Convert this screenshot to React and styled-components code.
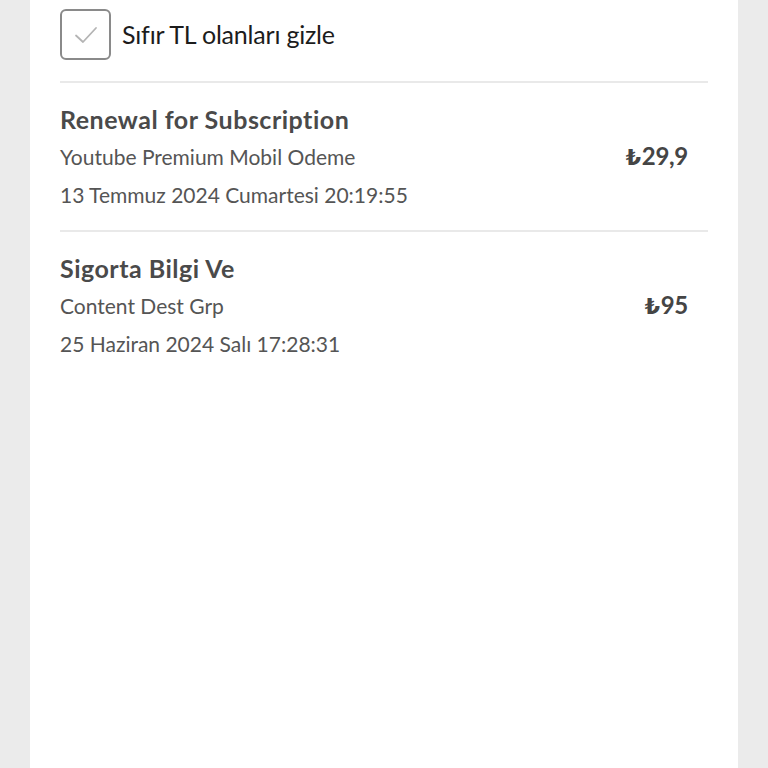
import React from 'react';
import styled, { createGlobalStyle } from 'styled-components';

const GlobalStyle = createGlobalStyle`
  html, body {
    margin: 0;
    padding: 0;
    background: #ebebeb;
  }
  body {
    font-family: Lato, "Noto Sans", "DejaVu Sans", sans-serif;
  }
`;

const transactions = [
  {
    title: 'Renewal for Subscription',
    desc: 'Youtube Premium Mobil Odeme',
    date: '13 Temmuz 2024 Cumartesi 20:19:55',
    amount: '29,9',
  },
  {
    title: 'Sigorta Bilgi Ve',
    desc: 'Content Dest Grp',
    date: '25 Haziran 2024 Salı 17:28:31',
    amount: '95',
  },
];

const App = () => {
  return (
    <>
      <GlobalStyle />
      <Panel>
        <FilterRow>
          <CheckBox>
            <svg width="28" height="28" viewBox="0 0 28 28" fill="none">
              <path d="M4 14.5 L11 21 L24 7" stroke="#b4b4b4" strokeWidth="1.8" strokeLinecap="round" strokeLinejoin="round" />
            </svg>
          </CheckBox>
          <FilterLabel>Sıfır TL olanları gizle</FilterLabel>
        </FilterRow>
        {transactions.map((t) => (
          <Item key={t.title}>
            <Info>
              <Title>{t.title}</Title>
              <Line>{t.desc}</Line>
              <Line>{t.date}</Line>
            </Info>
            <Amount>
              <Lira>₺</Lira>
              {t.amount}
            </Amount>
          </Item>
        ))}
      </Panel>
    </>
  );
};

export default App;

const Panel = styled.div`
  margin: 0 30px;
  min-height: 100vh;
  background: #ffffff;
  padding: 9px 30px 0;
  box-sizing: border-box;
`;

const FilterRow = styled.div`
  display: flex;
  align-items: center;
  gap: 11px;
  padding-bottom: 21px;
`;

const CheckBox = styled.div`
  width: 51px;
  height: 51px;
  box-sizing: border-box;
  border: 2px solid #8a8a8a;
  border-radius: 6px;
  display: flex;
  align-items: center;
  justify-content: center;
`;

const FilterLabel = styled.span`
  font-size: 25px;
  color: #1c1c1c;
  letter-spacing: -0.2px;
  margin-top: -2px;
`;

const Item = styled.div`
  display: flex;
  align-items: center;
  border-top: 2px solid #e9e9e9;
  padding: 17px 20px 16px 0;
`;

const Info = styled.div`
  flex: 1;
  display: flex;
  flex-direction: column;
`;

const Title = styled.div`
  font-size: 25px;
  font-weight: 700;
  color: #4a4a4a;
  line-height: 38px;
  letter-spacing: 0.5px;
`;

const Line = styled.div`
  font-size: 21px;
  color: #555555;
  line-height: 38px;
  letter-spacing: 0;
`;

const Amount = styled.div`
  font-size: 24px;
  font-weight: 700;
  color: #454545;
  letter-spacing: -0.3px;
  margin-top: -3px;
`;

const Lira = styled.span`
  font-family: "DejaVu Sans", sans-serif;
  font-size: 22px;
  margin-right: 1px;
`;
